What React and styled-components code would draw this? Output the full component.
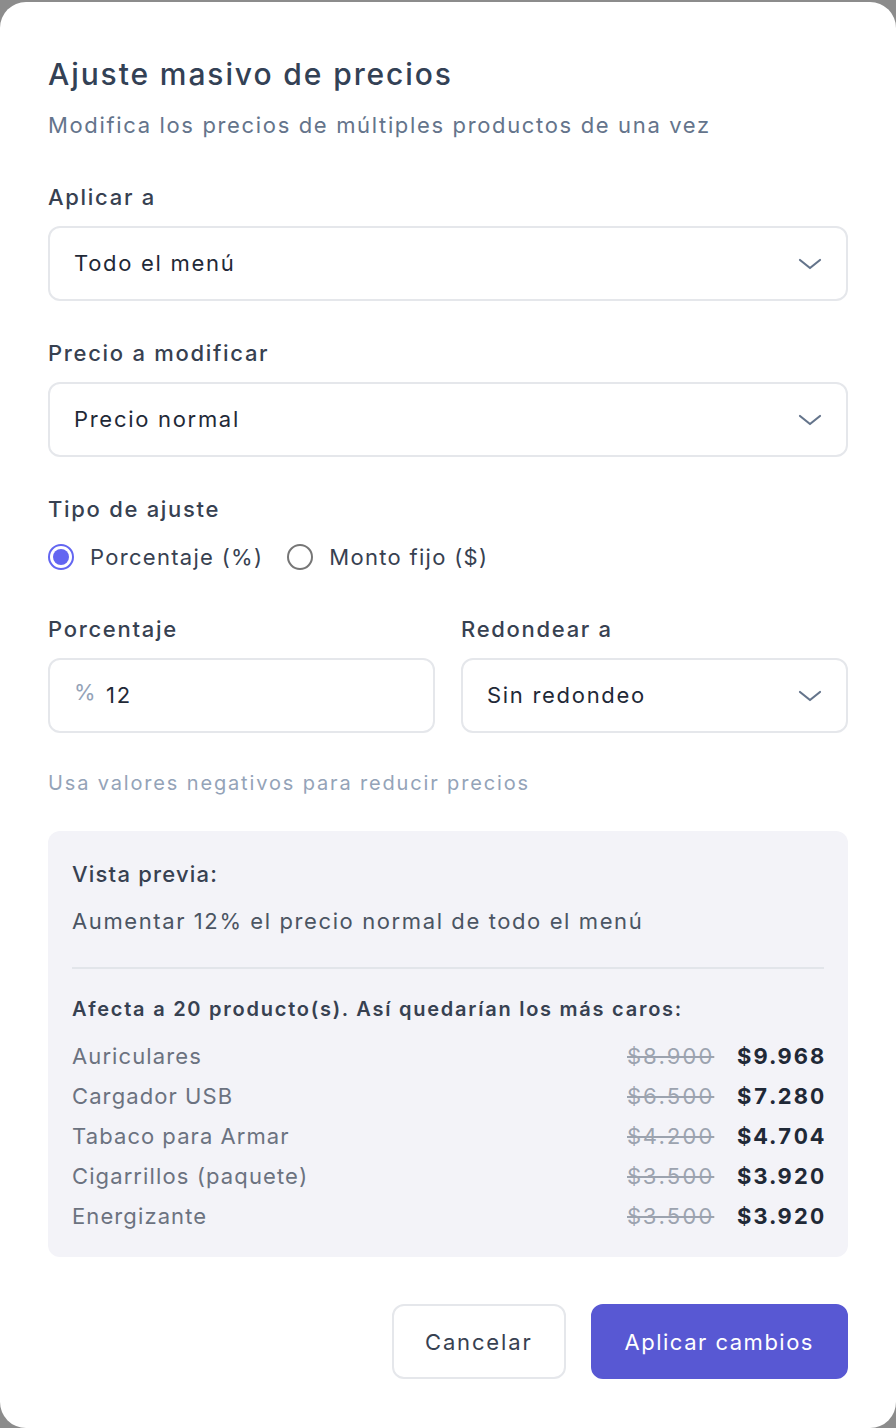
import React from "react";
import styled, { createGlobalStyle } from "styled-components";

const Global = createGlobalStyle`
  html, body { margin: 0; padding: 0; background: #8c8c8c; }
  body { font-family: Inter, "Noto Sans", sans-serif; -webkit-font-smoothing: antialiased; }
  * { box-sizing: border-box; }
`;

const Card = styled.div`
  margin-top: 2px;
  width: 896px;
  height: 1426px;
  background: #ffffff;
  border-radius: 26px;
  padding: 52px 48px 0 48px;
  display: flex;
  flex-direction: column;
  color: #374151;
`;

const Title = styled.h1`
  margin: 0;
  font-size: 30px;
  line-height: 40px;
  font-weight: 500;
  color: #334155;
  letter-spacing: 1.9px;
`;

const Subtitle = styled.p`
  margin: 15px 0 0 0;
  font-size: 22px;
  line-height: 32px;
  color: #64748b;
  letter-spacing: 1.65px;
`;

const Field = styled.div`
  display: flex;
  flex-direction: column;
  margin-top: ${(p) => p.$mt || 0}px;
  min-width: 0;
`;

const Label = styled.label`
  font-size: 22px;
  line-height: 32px;
  font-weight: 500;
  color: #374151;
  margin-bottom: 13px;
  letter-spacing: 1.7px;
`;

const Box = styled.div`
  height: 75px;
  border: 2px solid #e5e7eb;
  border-radius: 12px;
  display: flex;
  align-items: center;
  padding: 0 24px 0 24px;
  background: #fff;
  font-size: 22px;
  color: #1f2937;
  gap: 10px;
`;

const BoxText = styled.span`
  flex: 1;
  letter-spacing: 1.7px;
  margin-top: -2px;
`;

const Prefix = styled.span`
  color: #94a3b8;
  font-size: 22px;
  margin-top: -7px;
  letter-spacing: 0.5px;
`;

const Chevron = () => (
  <svg width="24" height="24" viewBox="0 0 24 24" fill="none" stroke="#64748b" strokeWidth="2.2" strokeLinecap="round" strokeLinejoin="round">
    <path d="M2 8l10 8 10-8" />
  </svg>
);

const Select = ({ children }) => (
  <Box>
    <BoxText>{children}</BoxText>
    <Chevron />
  </Box>
);

const RadioRow = styled.div`
  display: flex;
  align-items: center;
  gap: 24px;
  margin-top: 6px;
`;

const RadioOpt = styled.div`
  display: flex;
  align-items: center;
  gap: 16px;
  font-size: 22px;
  color: #374151;
  letter-spacing: 1.3px;
`;

const RadioDot = styled.span`
  width: 26px;
  height: 26px;
  border-radius: 50%;
  border: 2px solid ${(p) => (p.$on ? "#6366f1" : "#767676")};
  display: flex;
  align-items: center;
  justify-content: center;
  &::after {
    content: "";
    width: 16px;
    height: 16px;
    border-radius: 50%;
    background: ${(p) => (p.$on ? "#6366f1" : "transparent")};
  }
`;

const Row2 = styled.div`
  display: grid;
  grid-template-columns: 1fr 1fr;
  gap: 26px;
  margin-top: 43px;
`;

const Help = styled.p`
  margin: 34px 0 0 0;
  font-size: 20px;
  line-height: 32px;
  color: #94a3b8;
  letter-spacing: 1.85px;
`;

const Preview = styled.div`
  margin-top: 32px;
  background: #f3f3f8;
  border-radius: 12px;
  padding: 26px 24px 21px 24px;
  display: flex;
  flex-direction: column;
`;

const PrevTitle = styled.div`
  font-size: 22px;
  line-height: 34px;
  font-weight: 500;
  color: #374151;
  letter-spacing: 1.2px;
`;

const PrevText = styled.div`
  margin-top: 14px;
  font-size: 22px;
  line-height: 32px;
  color: #4b5563;
  letter-spacing: 1.6px;
`;

const Divider = styled.hr`
  border: none;
  border-top: 2px solid #e2e5ea;
  margin: 30px 0 24px 0;
`;

const Affects = styled.div`
  font-size: 20px;
  line-height: 32px;
  font-weight: 600;
  color: #374151;
  margin-bottom: 11px;
  letter-spacing: 1.75px;
`;

const ItemRow = styled.div`
  display: flex;
  align-items: center;
  height: 40px;
  font-size: 22px;
  font-variant-numeric: tabular-nums;
`;

const ItemName = styled.span`
  flex: 1;
  color: #6b7280;
  letter-spacing: 1.1px;
`;

const OldPrice = styled.span`
  color: #9ca3af;
  text-decoration: line-through;
  margin-right: 23px;
  letter-spacing: 1.7px;
  width: 87px;
  white-space: nowrap;
`;

const NewPrice = styled.span`
  color: #1f2937;
  font-weight: 700;
  letter-spacing: 2px;
  width: 87px;
  white-space: nowrap;
`;

const Footer = styled.div`
  display: flex;
  justify-content: flex-end;
  gap: 25px;
  margin-top: 47px;
`;

const Button = styled.button`
  height: 75px;
  border-radius: 12px;
  font-family: inherit;
  font-size: 22px;
  padding: 0 ${(p) => (p.$primary ? 32 : 31)}px;
  border: 2px solid ${(p) => (p.$primary ? "#5858d3" : "#e5e7eb")};
  background: ${(p) => (p.$primary ? "#5858d3" : "#ffffff")};
  color: ${(p) => (p.$primary ? "#ffffff" : "#374151")};
  letter-spacing: ${(p) => (p.$primary ? 1.5 : 1.85)}px;
`;

const items = [
  ["Auriculares", "$8.900", "$9.968"],
  ["Cargador USB", "$6.500", "$7.280"],
  ["Tabaco para Armar", "$4.200", "$4.704"],
  ["Cigarrillos (paquete)", "$3.500", "$3.920"],
  ["Energizante", "$3.500", "$3.920"],
];

export default function App() {
  return (
    <>
      <Global />
      <Card>
        <Title>Ajuste masivo de precios</Title>
        <Subtitle>Modifica los precios de múltiples productos de una vez</Subtitle>

        <Field $mt={40}>
          <Label>Aplicar a</Label>
          <Select>Todo el menú</Select>
        </Field>

        <Field $mt={36}>
          <Label>Precio a modificar</Label>
          <Select>Precio normal</Select>
        </Field>

        <Field $mt={36}>
          <Label>Tipo de ajuste</Label>
          <RadioRow>
            <RadioOpt>
              <RadioDot $on />
              Porcentaje (%)
            </RadioOpt>
            <RadioOpt>
              <RadioDot />
              Monto fijo ($)
            </RadioOpt>
          </RadioRow>
        </Field>

        <Row2>
          <Field>
            <Label>Porcentaje</Label>
            <Box>
              <Prefix>%</Prefix>
              <BoxText>12</BoxText>
            </Box>
          </Field>
          <Field>
            <Label>Redondear a</Label>
            <Select>Sin redondeo</Select>
          </Field>
        </Row2>

        <Help>Usa valores negativos para reducir precios</Help>

        <Preview>
          <PrevTitle>Vista previa:</PrevTitle>
          <PrevText>Aumentar 12% el precio normal de todo el menú</PrevText>
          <Divider />
          <Affects>Afecta a 20 producto(s). Así quedarían los más caros:</Affects>
          {items.map(([n, o, p]) => (
            <ItemRow key={n}>
              <ItemName>{n}</ItemName>
              <OldPrice>{o}</OldPrice>
              <NewPrice>{p}</NewPrice>
            </ItemRow>
          ))}
        </Preview>

        <Footer>
          <Button>Cancelar</Button>
          <Button $primary>Aplicar cambios</Button>
        </Footer>
      </Card>
    </>
  );
}
